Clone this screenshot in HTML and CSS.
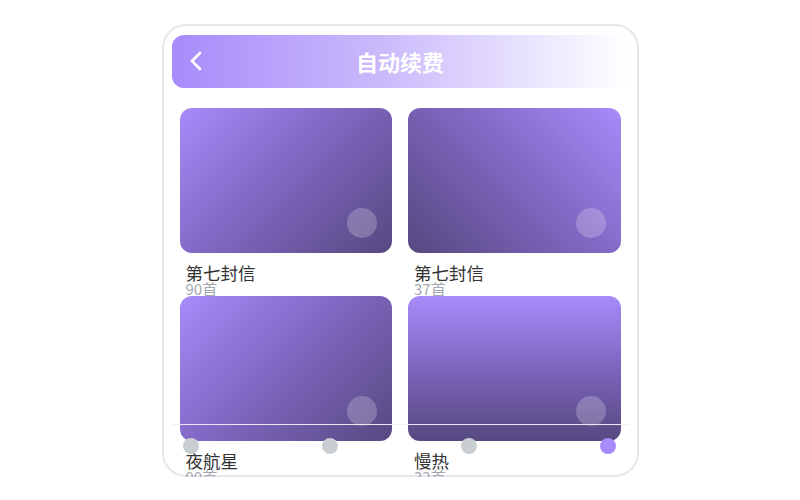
FILE: index.html
```html
<!DOCTYPE html>
<html lang="zh">
<head>
  <meta charset="utf-8">
  <title>自动续费</title>
  <link rel="stylesheet" href="styles.css">
</head>
<body>
  <div class="frame">
    <div class="header">
      <svg class="back" width="14" height="22" viewBox="0 0 14 22">
        <path d="M11 3 L3 11 L11 19" fill="none" stroke="#fff" stroke-width="2.6" stroke-linecap="round" stroke-linejoin="round"/>
      </svg>
      <h1>自动续费</h1>
    </div>

    <div class="grid">
      <div class="item">
        <div class="cover tl"><span class="play"></span></div>
        <div class="name">第七封信</div>
        <div class="count">90首</div>
      </div>
      <div class="item">
        <div class="cover tr"><span class="play"></span></div>
        <div class="name">第七封信</div>
        <div class="count">37首</div>
      </div>
      <div class="item">
        <div class="cover tl"><span class="play"></span></div>
        <div class="name">夜航星</div>
        <div class="count">90首</div>
      </div>
      <div class="item">
        <div class="cover top"><span class="play"></span></div>
        <div class="name">慢热</div>
        <div class="count">32首</div>
      </div>
    </div>

    <div class="track"></div>
    <div class="dots">
      <span class="dot"></span>
      <span class="dot"></span>
      <span class="dot"></span>
      <span class="dot active"></span>
    </div>
  </div>
</body>
</html>
```

FILE: styles.css
```css
body {
  margin: 0;
  background: #fff;
  font-family: "Noto Sans CJK SC", "Noto Sans", sans-serif;
}

.frame {
  position: relative;
  box-sizing: border-box;
  width: 477px;
  height: 453px;
  margin: 24px auto 0;
  padding: 9px 8px 0;
  border: 2px solid #e6e6ec;
  border-radius: 24px;
  background: #fff;
}

.header {
  position: relative;
  display: flex;
  align-items: center;
  justify-content: center;
  height: 53px;
  border-radius: 12px;
  background: linear-gradient(90deg, #a78bfa 0%, #c9b9fb 45%, #ffffff 100%);
}

.header .back {
  position: absolute;
  left: 17px;
  top: 15px;
}

.header h1 {
  margin: 0 0 2px;
  font-size: 22px;
  font-weight: 700;
  color: #fff;
}

.grid {
  display: grid;
  grid-template-columns: 1fr 1fr;
  column-gap: 16px;
  margin: 20px 8px 0;
}

.cover {
  position: relative;
  height: 145px;
  border-radius: 12px;
}

.cover.tl {
  background: linear-gradient(135deg, #a78bfa 0%, #8268c4 45%, #564980 100%);
}

.cover.tr {
  background: linear-gradient(225deg, #a78bfa 0%, #8268c4 45%, #564980 100%);
}

.cover.top {
  background: linear-gradient(180deg, #a78bfa 0%, #7d64bd 50%, #564980 100%);
}

.play {
  position: absolute;
  right: 15px;
  bottom: 15px;
  width: 30px;
  height: 30px;
  border-radius: 50%;
  background: rgba(255, 255, 255, 0.22);
}

.name {
  margin-top: 11px;
  padding-left: 6px;
  font-size: 17.5px;
  line-height: 18px;
  color: #333;
}

.count {
  padding-left: 6px;
  font-size: 15px;
  line-height: 14px;
  color: #a3a8b0;
}

.track {
  position: absolute;
  left: 8px;
  right: 8px;
  top: 398px;
  height: 1px;
  background: rgba(240, 240, 245, 0.95);
}

.dots {
  position: absolute;
  left: 19px;
  right: 20px;
  top: 412px;
  display: flex;
  justify-content: space-between;
}

.dot {
  width: 16px;
  height: 16px;
  border-radius: 50%;
  background: #c9ced3;
}

.dot.active {
  background: #a78bfa;
}
```
